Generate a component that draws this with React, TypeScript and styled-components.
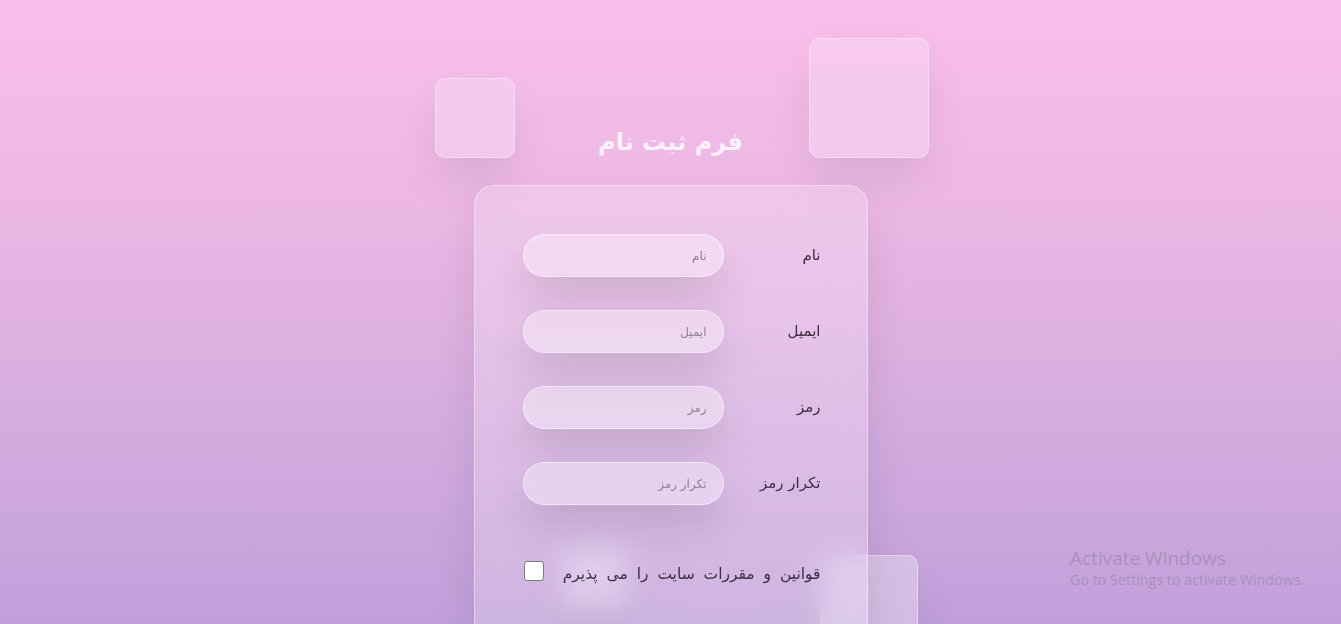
import React from 'react';
import styled, { createGlobalStyle } from 'styled-components';

const GlobalStyle = createGlobalStyle`
  html, body { margin:0; padding:0; }
  body { font-family:"DejaVu Sans", sans-serif; }
`

const Page = styled.div`
  position:relative;
  width:100%;
  height:624px;
  overflow:hidden;
  box-sizing:border-box;
  padding-top:122px;
  background:linear-gradient(180deg,#fabfea 0%,#ebb7e5 35%,#d7ade0 65%,#c1a0da 100%);
  display:flex;
  flex-direction:column;
  align-items:center;
`

const Square = styled.div<{ $x:number; $y:number; $size:number; $back?:boolean }>`
  position:absolute;
  left:calc(50% + ${p => p.$x}px);
  top:${p => p.$y}px;
  width:${p => p.$size}px;
  height:${p => p.$size}px;
  box-sizing:border-box;
  border-radius:10px;
  background:rgba(255,255,255,${p => p.$back ? 0.3 : 0.22});
  border:1px solid rgba(255,255,255,0.35);
  box-shadow:0 25px 45px rgba(0,0,0,0.08);
  z-index:0;
`

const Title = styled.h2`
  position:relative;
  z-index:1;
  margin:0;
  direction:rtl;
  font:normal 700 24px/40px "DejaVu Sans", sans-serif;
  color:rgba(255,255,255,0.82);
  letter-spacing:1px;
`

const Card = styled.form`
  position:relative;
  z-index:1;
  margin-top:23px;
  width:394px;
  min-height:520px;
  box-sizing:border-box;
  padding:48px 46px 0 48px;
  border-radius:20px;
  background:rgba(255,255,255,0.22);
  border:1px solid rgba(255,255,255,0.35);
  backdrop-filter:blur(14px);
  box-shadow:0 25px 45px rgba(0,0,0,0.1);
  display:flex;
  flex-direction:column;
  gap:33px;
`

const Row = styled.label`
  direction:rtl;
  display:flex;
  align-items:center;
  justify-content:space-between;
`

const Label = styled.span`
  font:normal 400 15px/1 "DejaVu Sans", sans-serif;
  color:#3a2f3e;
`

const Field = styled.input`
  direction:rtl;
  width:201px;
  height:43px;
  box-sizing:border-box;
  padding:0 16px;
  border-radius:22px;
  border:1px solid rgba(255,255,255,0.45);
  background:rgba(255,255,255,0.35);
  box-shadow:0 22px 40px rgba(0,0,0,0.12);
  outline:none;
  font:normal 400 12px "DejaVu Sans", sans-serif;
  color:#444;
  &::placeholder { color:#8d8290; }
`

const Terms = styled.label`
  direction:rtl;
  display:flex;
  align-items:center;
  gap:19px;
  margin-top:27px;
  font:normal 400 15.5px/1 "DejaVu Sans", sans-serif;
  color:#3a2f3e;
  word-spacing:4px;
`

const Check = styled.input`
  appearance:none;
  margin:0;
  width:20px;
  height:20px;
  box-sizing:border-box;
  border:1px solid #7a7a7a;
  border-radius:3px;
  background:#fff;
  transform:translateY(-4px);
`

const Watermark = styled.div`
  position:absolute;
  left:1070px;
  top:546px;
  font-family:"Open Sans", sans-serif;
  color:rgba(140,130,150,0.55);
  line-height:1.3;
`

const WatermarkTitle = styled.div`
  font-size:19px;
`

const WatermarkSub = styled.div`
  font-size:14.3px;
`

const fields = [
  { label:'نام', placeholder:'نام', type:'text' },
  { label:'ایمیل', placeholder:'ایمیل', type:'email' },
  { label:'رمز', placeholder:'رمز', type:'password' },
  { label:'تکرار رمز', placeholder:'تکرار رمز', type:'password' },
]

export default function App() {
  return (
    <Page>
      <GlobalStyle/>
      <Square $x={-236} $y={78} $size={80}/>
      <Square $x={138} $y={38} $size={120}/>
      <Square $x={149} $y={555} $size={98} $back/>
      <Square $x={-108} $y={545} $size={62} $back/>

      <Title>فرم ثبت نام</Title>
      <Card onSubmit={e => e.preventDefault()}>
        {fields.map(f => (
          <Row key={f.label}>
            <Label>{f.label}</Label>
            <Field type={f.type === 'password' ? 'text' : f.type} placeholder={f.placeholder}/>
          </Row>
        ))}
        <Terms>
          قوانین و مقررات سایت را می پذیرم
          <Check type="checkbox"/>
        </Terms>
      </Card>

      <Watermark>
        <WatermarkTitle>Activate Windows</WatermarkTitle>
        <WatermarkSub>Go to Settings to activate Windows.</WatermarkSub>
      </Watermark>
    </Page>
  );
}
